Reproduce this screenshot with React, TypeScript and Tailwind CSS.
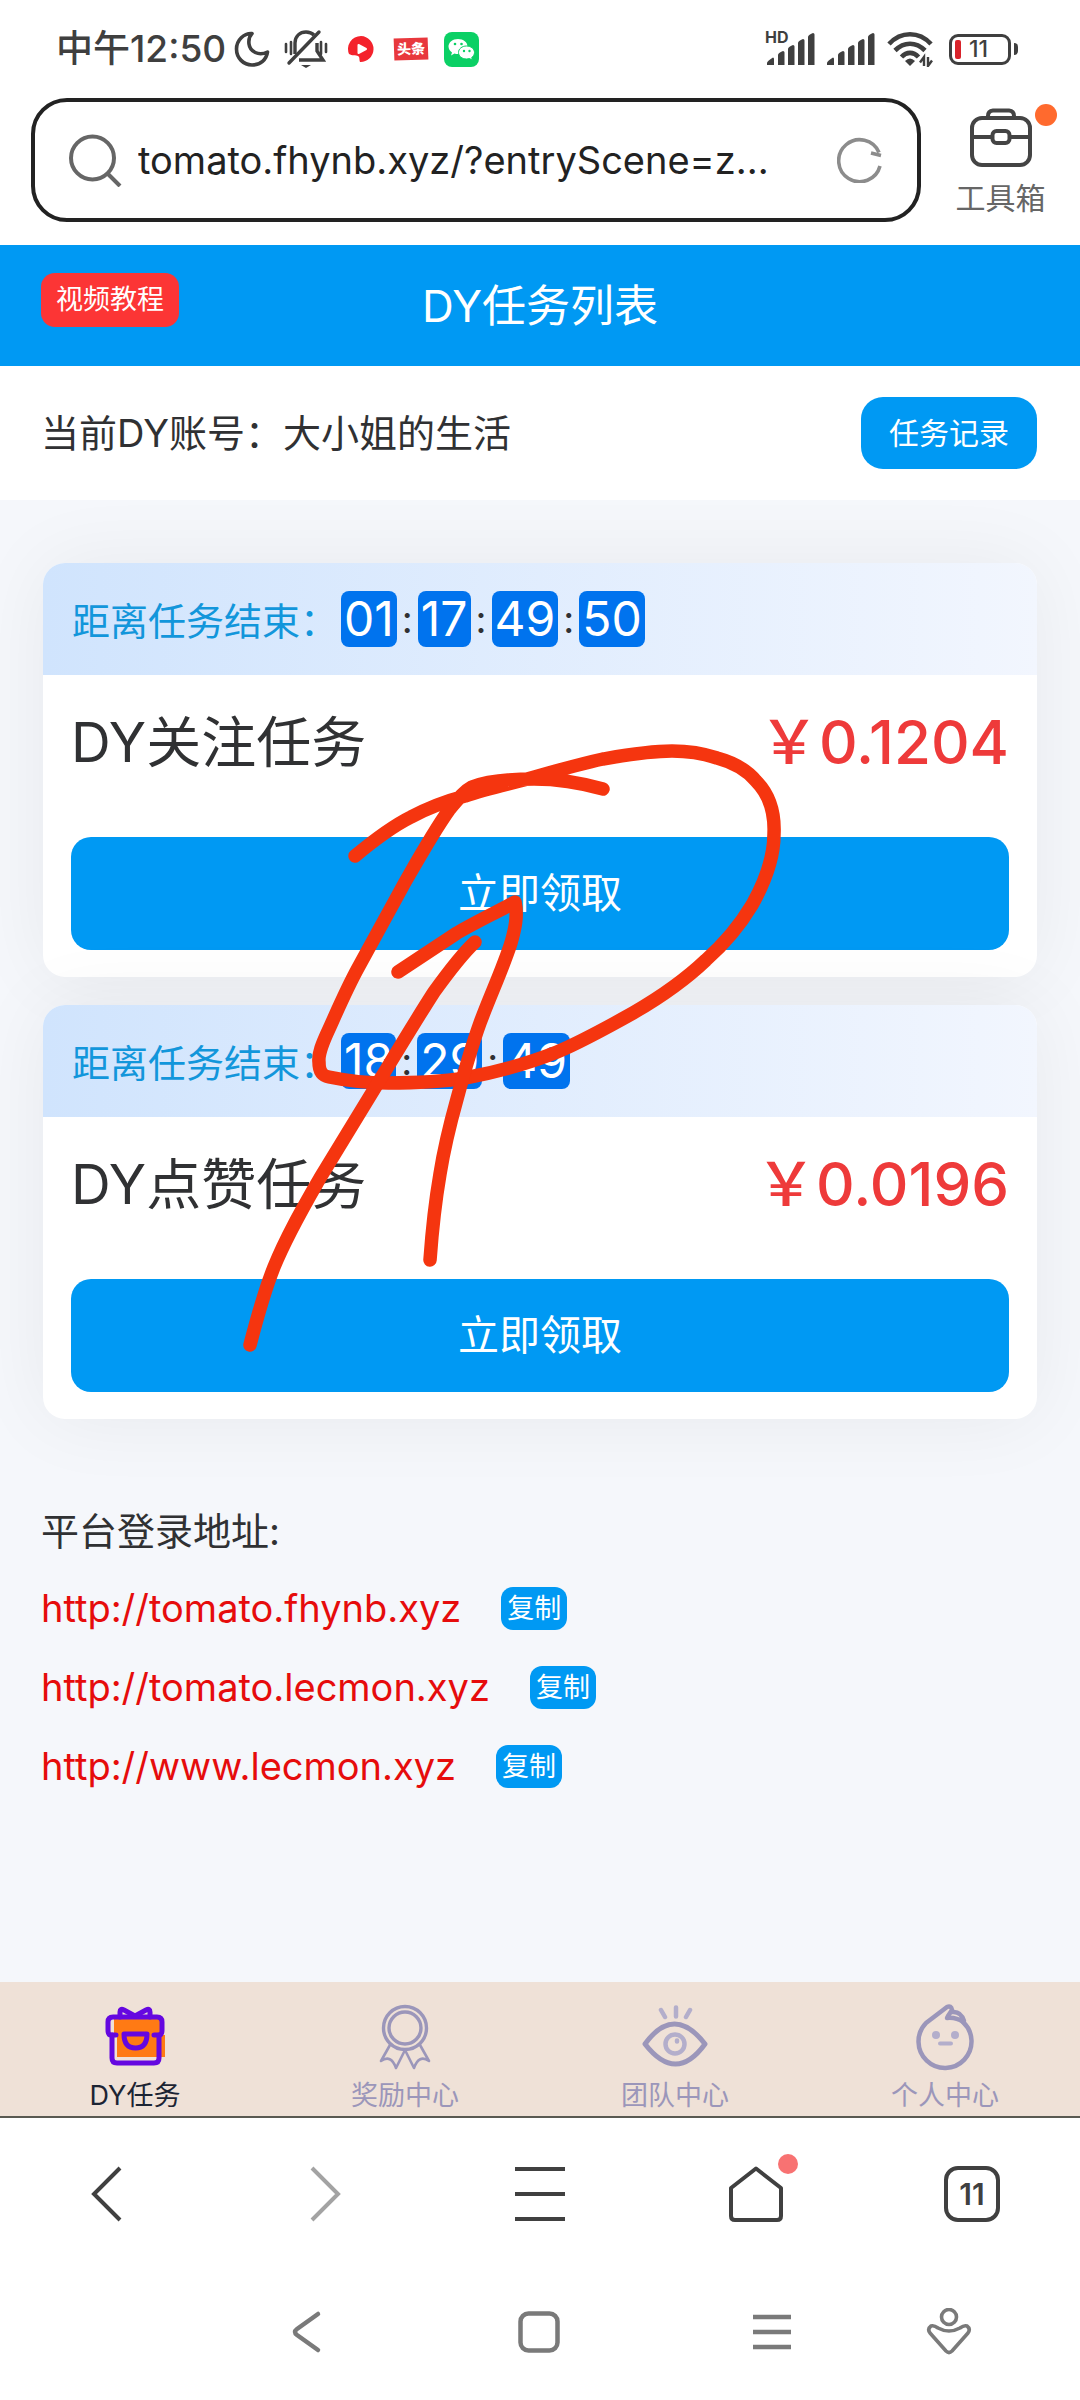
import type { ReactNode } from 'react';

type Task = {
  name: string;
  price: string;
  countdown: string[];
};

const tasks: Task[] = [
  { name: 'DY关注任务', price: '0.1204', countdown: ['01', '17', '49', '50'] },
  { name: 'DY点赞任务', price: '0.0196', countdown: ['18', '29', '49'] },
];

const loginUrls = ['http://tomato.fhynb.xyz', 'http://tomato.lecmon.xyz', 'http://www.lecmon.xyz'];

export default function App() {
  return (
    <div className="relative flex min-h-screen flex-col overflow-hidden bg-white font-['Inter','Noto_Sans_CJK_SC',sans-serif] text-[#303133]">
      <StatusBar />
      <AddressBar />
      <PageHeader />
      <AccountRow />
      <main className="flex-1 bg-[#f5f7fb] pt-[63px]">
        <div className="flex flex-col gap-7 px-[43px]">
          {tasks.map((task) => (
            <TaskCard key={task.name} task={task} />
          ))}
        </div>
        <LoginUrls />
      </main>
      <TabBar />
      <BrowserBar />
      <SystemBar />
      <PenMarks />
    </div>
  );
}

function StatusBar() {
  return (
    <div className="flex h-[98px] items-center justify-between pr-[62px] pl-14 text-[#3f3f3f]">
      <div className="flex items-center">
        <span className="text-[37px] font-medium">中午12:50</span>
        <svg className="ml-2 h-9 w-9" viewBox="0 0 36 36" fill="none" stroke="currentColor" strokeWidth="3.6" strokeLinejoin="round">
          <path d="M18 2.5C10 2 2.5 9 2.5 18s7 16 15.500 16S32.500 28.500 33.500 21c-9 4.500-17.500-.5-18.500-8C14.500 9 15.500 5 18 2.500Z" />
        </svg>
        <svg className="ml-3.5 h-10 w-11" viewBox="0 0 44 40" fill="none" stroke="currentColor" strokeWidth="3.4">
          <path d="M11 25V14C11 7 16 3 22 3c3.500 0 6 1 8 3M15 31h24l-6-9V14" />
          <path d="M35 3 5 34" strokeLinecap="round" />
          <path d="M2 15v8M7 13v12M37 13v12M42 15v8" strokeWidth="2.6" strokeLinecap="round" />
          <path d="M17 36h10l-5 3z" fill="currentColor" stroke="none" />
        </svg>
        <svg className="ml-[19px] h-7 w-7" viewBox="0 0 28 28">
          <path d="M14 1a13 13 0 1 1-1 26c-1-3 0-5-2-6s-6 0-9-2A13 13 0 0 1 14 1Z" fill="#f4222c" />
          <path d="M11.500 10v8l7.500-4z" fill="#fff" stroke="#fff" strokeWidth="2" strokeLinejoin="round" />
        </svg>
        <span className="ml-[19px] -rotate-2 bg-[#e8383d] px-[3px] text-[14px] leading-[22px] font-black text-white">头条</span>
        <svg className="ml-4 h-[35px] w-[35px]" viewBox="0 0 35 35">
          <rect width="35" height="35" rx="8" fill="#0bd065" />
          <path d="M14 7c-5.500 0-9.500 3.500-9.500 7.500 0 2.500 1.500 4.500 3.500 6l-1 3 3.500-2c1 .4 2 .5 3.500.5 5.500 0 9.500-3.300 9.500-7.500S19.500 7 14 7Z" fill="#fff" />
          <path d="M22.500 14c-4.500 0-8 2.800-8 6.500s3.500 6.500 8 6.500c1 0 2-.2 3-.5l3 1.700-.8-2.700c1.800-1.200 2.800-3 2.800-5 0-3.700-3.500-6.500-8-6.500Z" fill="#fff" stroke="#0bd065" />
          <g fill="#0bd065">
            <circle cx="11" cy="12" r="1.300" />
            <circle cx="17.500" cy="12" r="1.300" />
            <circle cx="20" cy="19" r="1.200" />
            <circle cx="25.500" cy="19" r="1.200" />
          </g>
        </svg>
      </div>
      <div className="flex items-center">
        <div className="relative">
          <span className="absolute -top-1 -left-0.5 text-[16px] leading-4 font-bold">HD</span>
          <SignalBars />
        </div>
        <span className="ml-3">
          <SignalBars />
        </span>
        <svg className="ml-3 h-9 w-[46px]" viewBox="0 0 46 36" fill="none" stroke="currentColor" strokeWidth="4.6">
          <path d="M2 13C14 0 32 0 44 13" />
          <path d="M8 19.500c9-9 21-9 30 0" />
          <path d="M14.500 26c5-5.500 12-5.500 17 0" />
          <path d="M18 30q5-5 10 0l-5 5z" fill="currentColor" stroke="none" />
          <path d="M37 35V26l-4 5.500M41 26v9l4-5.500" strokeWidth="2.400" />
        </svg>
        <div className="ml-4 flex items-center gap-[3px]">
          <div className="flex h-[31px] w-[62px] items-center rounded-[9px] border-3 border-current pl-[3px]">
            <span className="h-[19px] w-[6px] rounded-[2px] bg-[#d8232a]" />
            <span className="ml-2 text-[23px] leading-none font-medium">11</span>
          </div>
          <span className="h-3 w-1 rounded-r-sm bg-current" />
        </div>
      </div>
    </div>
  );
}

function SignalBars() {
  return (
    <svg className="h-8 w-12" viewBox="0 0 48 32" fill="currentColor">
      <path d="M0 32v-2q0-2 6-5.500q1 0 1 1.500v6zM11 32V22q0-2 5-4q1.500 0 1.500 1.500V32zM21 32V16q0-2 5-4q1.500 0 1.500 1.500V32zM31 32V10q0-2 5-4q1.500 0 1.500 1.500V32zM41 32V4q0-2 5-4q1.500 0 1.500 1.500V32z" />
    </svg>
  );
}

function AddressBar() {
  return (
    <div className="flex h-[147px] items-start pl-[31px]">
      <div className="flex h-[124px] flex-1 items-center rounded-[36px] border-4 border-[#222] px-[34px]">
        <svg className="h-[53px] w-[53px] shrink-0" viewBox="0 0 53 53" fill="none" stroke="#666" strokeWidth="4">
          <circle cx="23.500" cy="24" r="21.500" />
          <path d="m39 40 12 12" />
        </svg>
        <input
          aria-label="网址"
          className="ml-4 min-w-0 flex-1 bg-transparent text-[38px] text-[#222] outline-none"
          defaultValue="tomato.fhynb.xyz/?entryScene=z..."
        />
        <button aria-label="刷新">
          <svg className="h-[46px] w-[46px]" viewBox="0 0 46 46" fill="none" stroke="#8c8c8c" strokeWidth="3.6">
            <path d="M43 29A21 21 0 1 1 42 15.500" />
            <path d="M44 18.500 34 16" />
          </svg>
        </button>
      </div>
      <button className="relative flex w-[159px] flex-col items-center pt-2.5 text-[#666]">
        <svg className="h-[60px] w-[62px]" viewBox="0 0 62 60" fill="none" stroke="#444" strokeWidth="4">
          <rect x="2" y="10" width="58" height="47" rx="10" />
          <path d="M18 10v-2q0-5 5-5.500h16q5 .5 5 5.500v2M2 29h20M40 29h20" />
          <rect x="22.500" y="23" width="17" height="12" rx="4" />
        </svg>
        <span className="absolute top-[6px] right-[23px] h-[22px] w-[22px] rounded-full bg-[#ff6a2e]" />
        <span className="mt-2 text-[30px]">工具箱</span>
      </button>
    </div>
  );
}

function PageHeader() {
  return (
    <header className="relative flex h-[121px] items-center justify-center bg-[#0099f3] text-white">
      <button className="absolute top-7 left-[41px] h-[54px] rounded-[14px] bg-[#fc3535] px-[15px] text-[27px]">视频教程</button>
      <h1 className="text-[44px]">DY任务列表</h1>
    </header>
  );
}

function AccountRow() {
  return (
    <div className="flex h-[134px] items-center justify-between pr-[43px] pl-[41px]">
      <p className="text-[38px]">当前DY账号：大小姐的生活</p>
      <button className="h-[72px] rounded-[22px] bg-[#0099f3] px-7 text-[30px] text-white">任务记录</button>
    </div>
  );
}

function TaskCard({ task }: { task: Task }) {
  return (
    <section className="rounded-[22px] bg-white pb-[27px] shadow-[0_0_80px_rgba(0,0,0,0.06)]">
      <div className="flex h-28 items-center rounded-t-[22px] bg-gradient-to-r from-[#d0e4fd] to-[#f2f6fe] pl-[29px]">
        <span className="pt-1 text-[38px] text-[#1296db]">距离任务结束：</span>
        <div className="ml-[3px] flex items-center text-[38px]">
          {task.countdown.map((part, i) => (
            <div key={i} className="flex items-center">
              {i > 0 && <span className="w-[21px] text-center">:</span>}
              <span className="h-14 rounded-lg bg-[#0073ee] px-[3px] text-[48px] leading-14 text-white">{part}</span>
            </div>
          ))}
        </div>
      </div>
      <div className="px-7">
        <div className="flex h-[162px] items-start justify-between pt-[27px]">
          <h2 className="text-[55px] leading-[80px]">{task.name}</h2>
          <span className="text-[60px] leading-[80px] font-medium text-[#ee3a3a]">￥{task.price}</span>
        </div>
        <button className="h-[113px] w-full rounded-[20px] bg-[#0099f3] text-[41px] text-white">立即领取</button>
      </div>
    </section>
  );
}

function LoginUrls() {
  return (
    <section className="mt-[74px] pl-[41px] text-[38px]">
      <h3 className="leading-[76px]">平台登录地址:</h3>
      <ul>
        {loginUrls.map((url) => (
          <li key={url} className="flex h-[79px] items-center gap-10">
            <a href={url} className="text-[#e60c0c]">
              {url}
            </a>
            <button className="h-[43px] rounded-xl bg-[#0099f3] px-1.5 text-[27px] leading-none text-white">复制</button>
          </li>
        ))}
      </ul>
    </section>
  );
}

function TabBar() {
  return (
    <nav className="grid h-[136px] grid-cols-4 border-b-2 border-[#5a5a52] bg-[#efe1d7]">
      <TabItem label="DY任务" active>
        <path d="M12 15h46v16h5v22H15V31h-3z" fill="#ff7a14" stroke="none" />
        <g stroke="#6507e0" strokeWidth="5">
          <path d="M14 31H9q-3 0-3-5v-8q0-5 5-5h44q5 0 5 5v8q0 5-3 5h-5" />
          <path d="M10 31v23q0 5 5 5h37q5 0 5-5V31" />
          <path d="M18 13V8q0-4 4-2l11 6 11-6q4-2 4 2v5" />
          <path d="M22 30h23q0 14-11.500 14T22 30Z" />
        </g>
      </TabItem>
      <TabItem label="奖励中心">
        <circle cx="33" cy="24" r="21.500" />
        <circle cx="33" cy="24" r="16" />
        <path d="M18 41 9 57q10-7 15 7l9-18 9 18q5-14 15-7l-9-16" strokeWidth="2.600" />
      </TabItem>
      <TabItem label="团队中心">
        <path d="M3 40Q32 0 63 40Q34 80 3 40Z" strokeWidth="5" />
        <g stroke="#b3aecb" strokeWidth="4.500">
          <circle cx="33" cy="40" r="9.500" />
          <path d="M35 36.500v1M19 6l4 7M34 3.500v9M48 6l-4 7" />
        </g>
      </TabItem>
      <TabItem label="个人中心">
        <path d="M51 18A26.500 26.500 0 1 1 14 19L35 3q4-2 5 3l-4 6" strokeWidth="4.500" />
        <path d="M40 8q9-1 12 9M35 14q9-1 16 4" strokeWidth="4.500" />
        <g fill="#b3aecb" stroke="none">
          <circle cx="24" cy="31" r="4" />
          <circle cx="43" cy="31" r="4" />
          <rect x="26" y="37.500" width="15" height="4" rx="2" />
        </g>
      </TabItem>
    </nav>
  );
}

function TabItem({ label, active = false, children }: { label: string; active?: boolean; children: ReactNode }) {
  return (
    <button className={`flex flex-col items-center pt-[22px] ${active ? 'text-[#1c2433]' : 'text-[#9b96ba]'}`}>
      <svg
        className="h-[68px] w-[66px]"
        viewBox="0 0 66 68"
        fill="none"
        stroke="currentColor"
        strokeWidth="3.400"
        strokeLinecap="round"
        strokeLinejoin="round"
      >
        {children}
      </svg>
      <span className="mt-1 text-[27px] leading-[40px]">{label}</span>
    </button>
  );
}

function BrowserBar() {
  return (
    <nav className="grid h-[152px] grid-cols-5 place-items-center text-[#404040]">
      <button aria-label="后退">
        <svg className="h-14 w-14" viewBox="0 0 56 56" fill="none" stroke="currentColor" strokeWidth="4">
          <path d="M40 2 14 28l26 26" />
        </svg>
      </button>
      <button aria-label="前进">
        <svg className="h-14 w-14" viewBox="0 0 56 56" fill="none" stroke="#a3a3a3" strokeWidth="4">
          <path d="m16 2 26 26-26 26" />
        </svg>
      </button>
      <button aria-label="菜单">
        <svg className="h-14 w-14" viewBox="0 0 56 56" stroke="currentColor" strokeWidth="4">
          <path d="M3 3h50M3 28h50M3 53h50" />
        </svg>
      </button>
      <button aria-label="主页" className="relative">
        <svg className="h-14 w-14" viewBox="0 0 56 56" fill="none" stroke="currentColor" strokeWidth="4" strokeLinejoin="round">
          <path d="M28 2.500 53 22v28q0 4-4 4H7q-4 0-4-4V22Z" />
        </svg>
        <span className="absolute -top-3 -right-3.5 h-5 w-5 rounded-full bg-[#f87272]" />
      </button>
      <button className="h-14 w-14 rounded-[14px] border-4 border-current text-[30px] leading-none font-semibold">11</button>
    </nav>
  );
}

function SystemBar() {
  return (
    <nav className="grid h-[130px] grid-cols-[233fr_233fr_233fr_121fr] justify-items-center pt-[38px] pr-[71px] pl-[189px] text-[#7a7a7a]">
      <button aria-label="返回" className="h-12">
        <svg className="h-12 w-12" viewBox="0 0 48 48" fill="none" stroke="currentColor" strokeWidth="4.500" strokeLinecap="round">
          <path d="M36 6 15 21q-4 3 0 6l21 15" />
        </svg>
      </button>
      <button aria-label="桌面" className="h-12">
        <svg className="h-12 w-12" viewBox="0 0 48 48" fill="none" stroke="currentColor" strokeWidth="4.500">
          <rect x="5.500" y="5.500" width="37" height="37" rx="8" />
        </svg>
      </button>
      <button aria-label="最近任务" className="h-12">
        <svg className="h-12 w-12" viewBox="0 0 48 48" stroke="currentColor" strokeWidth="4.500">
          <path d="M5 9h38M5 24h38M5 39h38" />
        </svg>
      </button>
      <button aria-label="无障碍" className="h-12">
        <svg className="h-12 w-12" viewBox="0 0 48 48" fill="none" stroke="currentColor" strokeWidth="3.600" strokeLinejoin="round">
          <circle cx="24" cy="9" r="7.500" />
          <path d="M6 18q3-1 7 2 11 6 22 0 4-3 7-2 4 3 1 7L27 43q-3 3-6 0L5 25q-3-4 1-7Z" />
        </svg>
      </button>
    </nav>
  );
}

// hand drawn circle and arrow pointing at the first claim button
function PenMarks() {
  return (
    <svg
      className="pointer-events-none absolute top-0 left-0 w-full"
      viewBox="0 0 1080 2400"
      fill="none"
      stroke="#f5350f"
      strokeWidth="13.500"
      strokeLinecap="round"
      strokeLinejoin="round"
    >
      <path d="M603 789C578 782 556 779 534 779C512 779 487 781 472 787C463 792 458 799 449 810C434 831 420 856 404 884L358 968C347 988 338 1009 329 1029C322 1044 318 1054 319 1062C319 1074 324 1076 329 1077C348 1081 366 1083 388 1083C413 1083 440 1082 465 1078C497 1072 527 1064 557 1052C583 1041 608 1027 633 1013C659 998 684 981 706 960C724 944 740 925 752 905C766 880 774 858 774 834C775 812 770 795 756 781C746 769 732 762 717 758C702 753 687 751 672 751C648 751 626 755 603 759C580 764 559 770 538 776C514 783 489 788 465 796C446 801 428 808 411 817C391 827 373 841 355 856" />
      <path d="M475 942C461 955 447 974 434 992C416 1020 398 1050 381 1078L320 1178C304 1206 287 1235 274 1267C264 1292 257 1318 250 1345" />
      <path d="M398 972L457 933C476 922 497 912 515 902C518 916 515 929 511 943C503 968 490 996 480 1023C471 1048 464 1073 457 1099C450 1124 444 1149 440 1174C435 1203 432 1232 430 1260" />
    </svg>
  );
}
